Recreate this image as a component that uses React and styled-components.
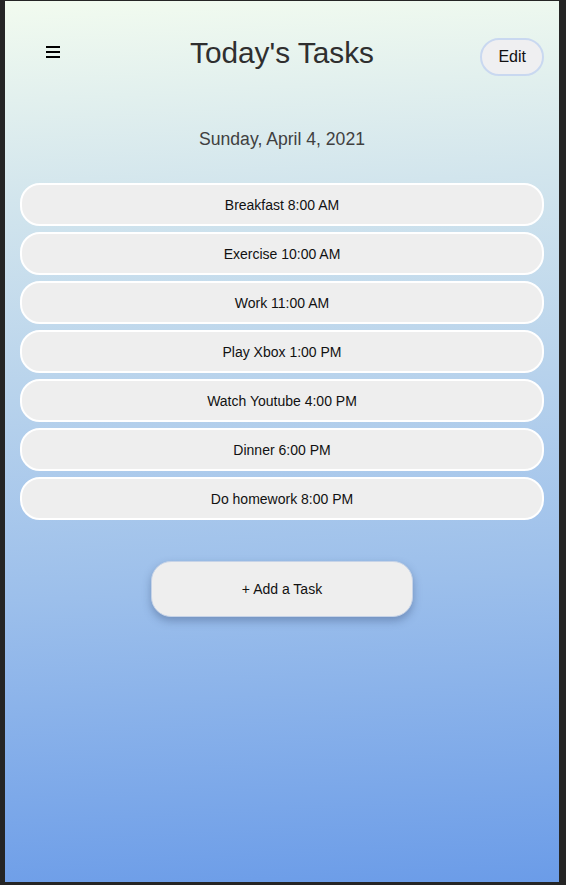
import React from 'react'
import styled, { createGlobalStyle } from 'styled-components'

const GlobalStyle = createGlobalStyle`
  html, body {
    margin: 0;
    padding: 0;
    background: #252525;
  }
  * {
    box-sizing: border-box;
  }
`;

const Frame = styled.div`
  padding: 1px 7px 3px 5px;
  background: #252525;
`;

const Screen = styled.main`
  height: 881px;
  background: linear-gradient(177deg, #f2fbef 0%, #d2e5ed 22%, #9cbfeb 66%, #6b9ce8 100%);
  font-family: "Liberation Sans", Arial, sans-serif;
  display: flex;
  flex-direction: column;
`;

const Header = styled.header`
  display: grid;
  grid-template-columns: 1fr auto 1fr;
  align-items: center;
  padding: 29px 15px 0;
`;

const MenuButton = styled.button`
  justify-self: start;
  margin-left: 26px;
  width: 14px;
  height: 12px;
  padding: 0;
  border: none;
  background: transparent;
  display: flex;
  flex-direction: column;
  justify-content: space-between;
  margin-top: -2px;
  span {
    display: block;
    height: 2px;
    background: #000;
  }
`;

const Title = styled.h1`
  margin: 0;
  font-size: 29.8px;
  font-weight: 400;
  color: #2f2f2f;
  line-height: 34px;
`;

const EditButton = styled.button`
  justify-self: end;
  margin-top: 8px;
  height: 38px;
  padding: 0 16px;
  border: 2px solid #c9d8f0;
  border-radius: 20px;
  background: #efeff1;
  font-family: inherit;
  font-size: 16px;
  color: #111;
`;

const DateLine = styled.h2`
  margin: 51px 0 0;
  text-align: center;
  font-size: 17.6px;
  font-weight: 400;
  color: #404040;
  line-height: 24px;
`;

const TaskList = styled.ul`
  list-style: none;
  margin: 32px 15px 0;
  padding: 0;
  display: flex;
  flex-direction: column;
  gap: 6px;
`;

const TaskItem = styled.li`
  height: 43px;
  border: 2px solid #fff;
  border-radius: 20px;
  background: #eeeeee;
  display: flex;
  align-items: center;
  justify-content: center;
  font-size: 14px;
  color: #111;
`;

const AddButton = styled.button`
  align-self: center;
  margin-top: 41px;
  width: 262px;
  height: 56px;
  border: 1px solid #c6d3e7;
  border-radius: 20px;
  background: #eeeeee;
  box-shadow: 0 4px 9px rgba(40, 60, 100, 0.35);
  font-family: inherit;
  font-size: 14px;
  color: #111;
`;

const tasks = [
  'Breakfast 8:00 AM',
  'Exercise 10:00 AM',
  'Work 11:00 AM',
  'Play Xbox 1:00 PM',
  'Watch Youtube 4:00 PM',
  'Dinner 6:00 PM',
  'Do homework 8:00 PM',
];

export default function App() {
  return (
    <Frame>
      <GlobalStyle />
      <Screen>
        <Header>
          <MenuButton aria-label="Menu">
            <span />
            <span />
            <span />
          </MenuButton>
          <Title>Today's Tasks</Title>
          <EditButton>Edit</EditButton>
        </Header>
        <DateLine>Sunday, April 4, 2021</DateLine>
        <TaskList>
          {tasks.map((t) => (
            <TaskItem key={t}>{t}</TaskItem>
          ))}
        </TaskList>
        <AddButton>+ Add a Task</AddButton>
      </Screen>
    </Frame>
  );
}
